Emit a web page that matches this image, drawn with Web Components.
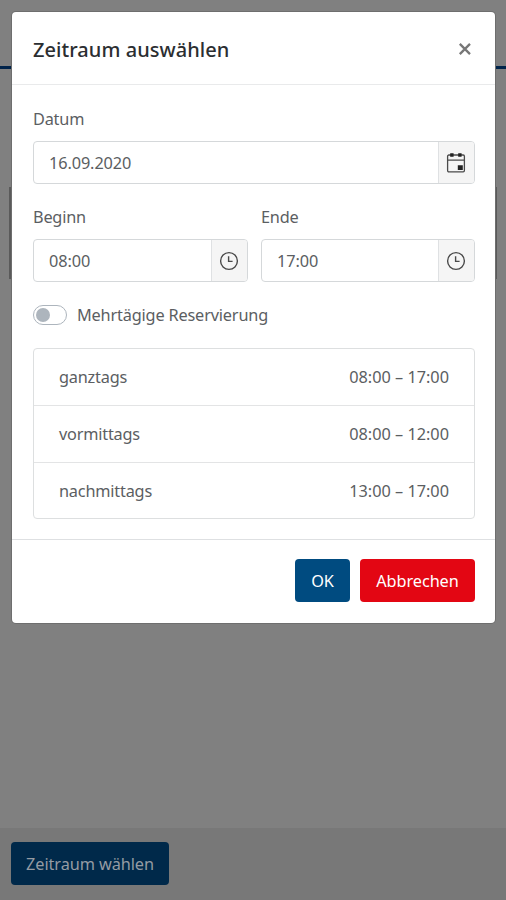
<!DOCTYPE html>
<html lang="de">
<head>
<meta charset="utf-8">
<title>Zeitraum auswählen</title>
<style>
html, body { margin: 0; height: 100%; }
body { font-family: "Noto Sans", "Open Sans", sans-serif; font-size: 16.3px; line-height: 24px; color: #5b5e62; overflow: hidden; background: #808080; }
</style>
</head>
<body>
<booking-page></booking-page>
<script>
function define(name, html, init) {
  const template = document.createElement('template');
  template.innerHTML = html;
  customElements.define(name, class extends HTMLElement {
    constructor() {
      super();
      this.attachShadow({ mode: 'open' }).append(template.content.cloneNode(true));
    }
    connectedCallback() { if (init) init(this, this.shadowRoot); }
  });
}

define('ui-icon', `<style>
  :host { display: block; width: 20px; height: 20px; color: #4a4a4a; }
  svg { display: none; width: 20px; height: 20px; overflow: visible; }
  :host([name=clock]) .clock, :host([name=calendar]) .calendar, :host([name=close]) .close { display: block; }
  .close { color: #777; }
</style>
<svg class="clock" viewBox="0 0 20 20" fill="none" stroke="currentColor" stroke-width="1.4"><circle cx="10" cy="10" r="8.4"/><path d="M9.6 5.2v5.2h4"/></svg>
<svg class="calendar" viewBox="0 0 20 20" fill="none" stroke="currentColor" stroke-width="1.3"><rect x="1.6" y="2" width="16.8" height="16.8" rx="1.2"/><path d="M1.6 7.2h16.8"/><path fill="#222" stroke="none" d="M11.8 12.2h5v4.8h-5z"/><path stroke="#222" stroke-width="3.4" d="M4.2 2h3.4M12.2 2h3.4"/></svg>
<svg class="close" viewBox="0 0 20 20" fill="none" stroke="currentColor" stroke-width="2.3"><path d="M4.8 4.9l10.2 10.2M15 4.9L4.8 15.1"/></svg>`);

define('ui-button', `<style>
  :host { display: block; }
  button { display: block; box-sizing: border-box; width: 100%; height: 43px; margin: 0; padding: 0; border: 0; border-radius: 4px; background: var(--fill, #004b80); color: var(--ink, #fff); font: inherit; letter-spacing: -.08px; white-space: nowrap; }
</style><button type="button"><slot></slot></button>`);

define('ui-field', `<style>
  :host { display: block; }
  label { display: block; height: 24px; margin-bottom: 10px; letter-spacing: -.2px; }
  .box { display: flex; box-sizing: border-box; height: 43px; border: 1px solid #d5d8da; border-radius: 4px; overflow: hidden; }
  .value { flex: 1; padding: 9px 0 0 15px; letter-spacing: -.1px; }
  .addon { display: grid; place-items: center; box-sizing: border-box; width: 36px; padding: 1px 2px 0 0; border-left: 1px solid #dfe1e3; background: #f5f5f5; }
</style>
<label></label><div class="box"><div class="value"><slot></slot></div><div class="addon"><ui-icon></ui-icon></div></div>`,
(host, root) => {
  root.querySelector('label').textContent = host.getAttribute('label');
  root.querySelector('ui-icon').setAttribute('name', host.getAttribute('icon'));
});

define('ui-switch', `<style>
  :host { display: flex; align-items: center; gap: 10px; height: 24px; letter-spacing: -.17px; }
  .track { box-sizing: border-box; display: flex; align-items: center; width: 34px; height: 20px; padding: 0 2px; border: 1px solid #adb5bd; border-radius: 10px; }
  .thumb { width: 14px; height: 14px; border-radius: 50%; background: #adb5bd; }
</style><div class="track"><div class="thumb"></div></div><span><slot></slot></span>`);

define('time-option', `<style>
  :host { display: flex; justify-content: space-between; align-items: center; box-sizing: border-box; height: 57px; padding: 0 25px; border-bottom: 1px solid #e3e4e5; letter-spacing: -.2px; }
  :host(:last-child) { height: 55px; border-bottom: 0; }
  .time { letter-spacing: 0; }
</style><span><slot></slot></span><span class="time"><slot name="time"></slot></span>`);

define('time-options', `<style>
  :host { display: block; box-sizing: border-box; height: 171px; border: 1px solid #dddfe0; border-radius: 4px; }
</style><slot></slot>`);

define('ui-modal', `<style>
  :host { display: flex; flex-direction: column; box-sizing: border-box; width: 483px; height: 611px; background: #fff; border-radius: 4px; box-shadow: 0 0 0 1px #6e6e6e; }
  header { display: flex; justify-content: space-between; align-items: center; box-sizing: border-box; height: 73px; padding: 3px 20px 0 21px; border-bottom: 1px solid #e9eaeb; }
  h1 { margin: 0; font-size: 20px; line-height: 30px; font-weight: 500; letter-spacing: .05px; color: #2b2e31; }
  ui-icon { margin-top: -2px; }
  main { flex: 1; padding: 22px 20px 0 21px; }
  footer { display: flex; justify-content: flex-end; gap: 10px; box-sizing: border-box; height: 84px; padding: 19px 20px 0; border-top: 1px solid #dee0e2; }
</style>
<header><h1><slot name="title"></slot></h1><ui-icon name="close"></ui-icon></header>
<main><slot></slot></main>
<footer><slot name="actions"></slot></footer>`);

define('booking-page', `<style>
  :host { display: grid; width: 506px; height: 900px; }
  .page, .overlay { grid-area: 1 / 1; }
  .page { display: flex; flex-direction: column; background: #808080; }
  .top { height: 66px; border-bottom: 3px solid #00234a; }
  .content { flex: 1; padding-top: 118px; }
  .panel { height: 92px; margin: 0 9px; background: #5a5a5a; }
  .bar { box-sizing: border-box; height: 72px; padding: 14px 11px; background: #787878; }
  .bar ui-button { width: 158px; --fill: #00294a; --ink: #949ba3; }
  .overlay { padding: 12px 0 0 12px; z-index: 1; }
  .times { display: flex; gap: 13px; margin: 20px 0; padding-top: 1px; }
  .start { width: 215px; } .end { flex: 1; }
  ui-switch { margin: 21px 0; }
  .ok { width: 55px; }
  .cancel { width: 115px; --fill: #e30613; }
</style>
<div class="page">
  <div class="top"></div>
  <div class="content"><div class="panel"></div></div>
  <div class="bar"><ui-button>Zeitraum wählen</ui-button></div>
</div>
<div class="overlay">
  <ui-modal>
    <span slot="title">Zeitraum auswählen</span>
    <ui-field label="Datum" icon="calendar">16.09.2020</ui-field>
    <div class="times">
      <ui-field class="start" label="Beginn" icon="clock">08:00</ui-field>
      <ui-field class="end" label="Ende" icon="clock">17:00</ui-field>
    </div>
    <ui-switch>Mehrtägige Reservierung</ui-switch>
    <time-options>
      <time-option>ganztags<span slot="time">08:00 – 17:00</span></time-option>
      <time-option>vormittags<span slot="time">08:00 – 12:00</span></time-option>
      <time-option>nachmittags<span slot="time">13:00 – 17:00</span></time-option>
    </time-options>
    <ui-button class="ok" slot="actions">OK</ui-button>
    <ui-button class="cancel" slot="actions">Abbrechen</ui-button>
  </ui-modal>
</div>`);
</script>
</body>
</html>
